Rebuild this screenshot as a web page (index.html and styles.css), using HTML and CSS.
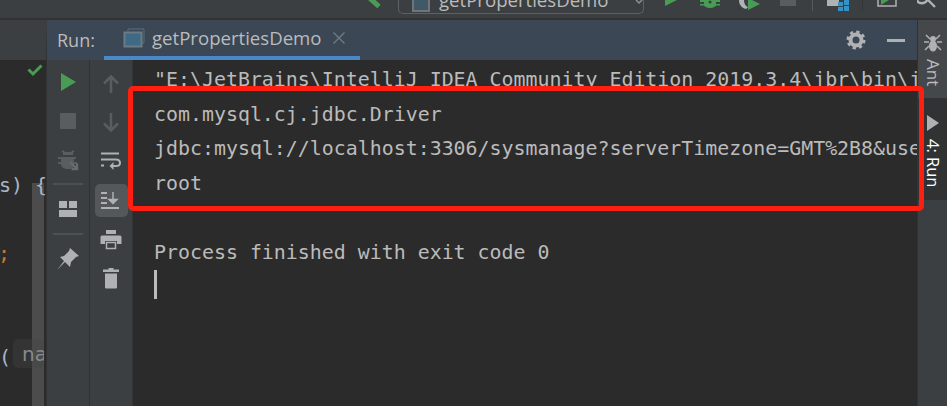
FILE: index.html
```html
<!DOCTYPE html>
<html lang="en">
<head>
<meta charset="utf-8">
<title>Run</title>
<link rel="stylesheet" href="styles.css">
</head>
<body>
<div class="window">
  <header class="topbar">
    <svg class="tb hammer" width="20" height="18" viewBox="0 0 20 18"><path d="M4.500 -2l9.500 8.500" stroke="#499c54" stroke-width="5" fill="none"/></svg>
    <div class="config">
      <svg class="cfg-ico" width="20" height="18" viewBox="0 0 20 18"><rect x="2" y="-2" width="16" height="15" fill="#3f5a66" stroke="#6e7478" stroke-width="2"/></svg>
      <span class="cfg-name">getPropertiesDemo</span>
      <svg width="8" height="5" viewBox="0 0 8 5"><path d="M1 0l3 3 3-3" fill="none" stroke="#8c9093" stroke-width="1.500"/></svg>
    </div>
    <svg class="tb t-run" width="13" height="18" viewBox="0 0 13 18"><path d="M0 0v6l12-6z" fill="#499c54"/></svg>
    <svg class="tb t-debug" width="20" height="18" viewBox="0 0 20 18"><path d="M0 0h20v2h-4v2h4v1.500h-4C15 7 13 8 10 8S5 7 4 5.500H0V4h4V2H0z" fill="#499c54"/><circle cx="10" cy="2" r="1.500" fill="#3c3f41"/></svg>
    <svg class="tb t-cov" width="22" height="18" viewBox="0 0 22 18"><path d="M1 0c0 5 3 8 7 9l2-2C7 6 6 3 6 0z" fill="#b0b3b5"/><path d="M10 -2v12l12-6z" fill="#499c54"/></svg>
    <div class="tb t-stop"></div>
    <div class="tb t-sep"></div>
    <svg class="tb t-struct" width="22" height="18" viewBox="0 0 22 18"><path d="M0 0h12v2h-1v4H0z" fill="#afb1b3"/><path fill="#3592c4" d="M11 2h5v4h-5zM17 0h5v5h-5zM11 7h5v4h-5zM17 6h5v5h-5z"/></svg>
    <div class="tb t-sep s2"></div>
    <svg class="tb t-win" width="20" height="18" viewBox="0 0 20 18"><path d="M1 0v6h18V0" fill="none" stroke="#afb1b3" stroke-width="1.500"/><path d="M4 -2v7l11-7z" fill="#499c54"/></svg>
    <svg class="tb t-search" width="20" height="18" viewBox="0 0 20 18"><path d="M0 0c1 4 8 5 11-1M11 0l7 7" fill="none" stroke="#afb1b3" stroke-width="2.400"/></svg>
  </header>
  <div class="main">
    <aside class="editor">
      <div class="gutter-wrap">
        <div class="scroll"></div>
        <pre class="code"><span class="c-b c1">s) {</span><span class="c-o c2">;</span><span class="c-b c3">(</span></pre>
        <span class="hint">na</span>
        <svg class="ok" width="16" height="14" viewBox="0 0 16 14"><path d="M1.500 6.500l4.500 4.500 8.500-8.500" fill="none" stroke="#499c54" stroke-width="3"/></svg>
      </div>
    </aside>
    <section class="run">
      <div class="run-head">
        <span class="run-label">Run:</span>
        <div class="run-tab">
          <svg class="tab-ico" width="22" height="20" viewBox="0 0 22 20"><path d="M5 3.500V1h16v14h-2" fill="none" stroke="#5d6e7c" stroke-width="1"/><rect x="1.500" y="4.500" width="17" height="14" fill="#3d6a85" stroke="#6d7a85" stroke-width="2"/></svg>
          <span class="tab-name">getPropertiesDemo</span>
          <svg class="tab-x" width="12" height="12" viewBox="0 0 12 12"><path d="M0.500 0.500l11 11M11.500 0.500l-11 11" stroke="#737b83" stroke-width="1.300"/></svg>
        </div>
        <svg class="gear" width="20" height="20" viewBox="0 0 20 20"><circle cx="10" cy="10" r="5.500" fill="none" stroke="#afb1b3" stroke-width="4"/><circle cx="10" cy="10" r="8" fill="none" stroke="#afb1b3" stroke-width="3" stroke-dasharray="3.280 3"/></svg>
        <div class="minimize"></div>
      </div>
      <div class="run-body">
        <div class="side s1">
          <svg class="i-play" width="22" height="22" viewBox="0 0 22 22"><path d="M4 2v18l15-9z" fill="#499c54"/></svg>
          <div class="stop"></div>
          <svg class="dim-bug" width="26" height="26" viewBox="0 0 26 26"><path fill="#5a5d5f" d="M8 2l2 2h6l2-2 1.500 1.500-1.500 1.500v2H8V5L6.500 3.500zM3 9h18v2h-2v3h3v2h-3c0 3-2 5-6 5s-7-2-7-5H3v-2h3v-3H3z"/><path d="M15 14l7 7M22 15.500V21h-5.500" fill="none" stroke="#686b6d" stroke-width="2.400"/></svg>
          <div class="rule"></div>
          <svg class="i-layout" width="18" height="16" viewBox="0 0 18 16"><path fill="#afb1b3" d="M0 0h8v7H0zM10 0h8v7h-8zM0 9h18v7H0z"/></svg>
          <div class="rule r2"></div>
          <svg width="24" height="24" viewBox="0 0 24 24"><path fill="#afb1b3" d="M14 1l9 8-3 1-5 5-1 5-5-5-8 8 7-9-4-4 4-1 5-5z"/></svg>
        </div>
        <div class="side s2">
          <svg width="16" height="18" viewBox="0 0 16 18"><path d="M8 18V2M1 8.500l7-7 7 7" fill="none" stroke="#5a5d5f" stroke-width="2.600"/></svg>
          <svg width="16" height="19" viewBox="0 0 16 19"><path d="M8 0v17M1 10.500l7 7 7-7" fill="none" stroke="#5a5d5f" stroke-width="2.600"/></svg>
          <svg width="20" height="20" viewBox="0 0 20 20"><path d="M0 1.500h18M0 7.500h15c2.500 0 4 1.500 4 3.500s-1.500 3-4 3h-4M0 13.500h3" fill="none" stroke="#afb1b3" stroke-width="2"/><path d="M12.500 10l-4 4 4 4z" fill="#afb1b3"/></svg>
          <div class="wrap-on"><svg width="20" height="18" viewBox="0 0 20 18"><path d="M0 1h6M0 6h6M0 11h6M0 16h18" fill="none" stroke="#afb1b3" stroke-width="2"/><path d="M12 0v7M8 7.500l4 4 4-4z" fill="#afb1b3" stroke="#afb1b3" stroke-width="1.500"/></svg></div>
          <svg width="22" height="20" viewBox="0 0 22 20"><path fill="#afb1b3" d="M6 0h10v4H6zM2 5.500h18a1.500 1.500 0 0 1 1.500 1.500v7H17v-3H5v3H.5V7A1.500 1.500 0 0 1 2 5.500z"/><path fill="none" stroke="#afb1b3" stroke-width="1.500" d="M6.500 12.500h9v6h-9z"/></svg>
          <svg width="16" height="21" viewBox="0 0 16 21"><path fill="#afb1b3" d="M5.500 0h5v1.500H16v2.500H0V1.500h5.500zM2 5.500h12v14a1 1 0 0 1-1 1H3a1 1 0 0 1-1-1z"/></svg>
        </div>
        <div class="console">
          <pre class="out">"E:\JetBrains\IntelliJ IDEA Community Edition 2019.3.4\jbr\bin\java.exe"
com.mysql.cj.jdbc.Driver
jdbc:mysql://localhost:3306/sysmanage?serverTimezone=GMT%2B8&amp;useUnicode=true
root

Process finished with exit code 0</pre>
          <div class="caret"></div>
        </div>
      </div>
    </section>
    <nav class="stripe">
      <div class="st-ant">
        <svg width="20" height="20" viewBox="0 0 20 20"><path d="M3 2l4 4M17 2l-4 4M1 9h5M19 9h-5M2 17l4-4M18 17l-4-4" stroke="#afb1b3" stroke-width="1.500" fill="none"/><circle cx="10" cy="6" r="3" fill="#afb1b3"/><ellipse cx="10" cy="13" rx="4" ry="5.500" fill="#afb1b3"/></svg>
        <span class="st-text">Ant</span>
      </div>
      <div class="st-run">
        <svg width="14" height="16" viewBox="0 0 14 16"><path d="M1 0v16l12-8z" fill="#afb1b3"/></svg>
        <span class="st-text on">4: Run</span>
      </div>
    </nav>
  </div>
  <div class="annot"></div>
</div>
</body>
</html>
```
FILE: styles.css
```css
* { box-sizing: border-box; }
html, body { margin: 0; padding: 0; background: #3c3f41; }
.window { position: relative; width: 947px; height: 406px; overflow: hidden; display: flex; flex-direction: column; background: #3c3f41; }

.topbar { height: 18px; flex: none; display: flex; align-items: flex-start; background: #3c3f41; overflow: hidden; }
.tb { flex: none; display: block; }
.hammer { margin-left: 365px; }
.config { flex: none; width: 246px; height: 14px; margin-left: 13px; display: flex; align-items: flex-end; padding: 0 9px 0 12px; border: 1px solid #5e6163; border-top: 0; border-radius: 0 0 5px 5px; position: relative; }
.cfg-ico { flex: none; margin-bottom: -3px; }
.cfg-name { font: 18.600px/24px "Open Sans", sans-serif; color: #bbbbbb; margin-left: 8px; margin-bottom: 1px; white-space: nowrap; width: 190px; flex: none; }
.config svg:last-child { flex: none; margin: 0 0 8px 6px; }
.t-run { margin-left: 21px; }
.t-debug { margin-left: 22px; }
.t-cov { margin-left: 18px; }
.t-stop { width: 16px; height: 6px; margin-left: 20px; background: #5a5d5f; }
.t-sep { width: 1px; height: 11px; margin-left: 16px; background: #565859; }
.t-struct { margin-left: 14px; }
.t-sep.s2 { margin-left: 13px; }
.t-win { margin-left: 14px; }
.t-search { margin-left: 20px; }

.main { flex: 1; min-height: 0; display: flex; border-top: 2px solid #323232; }
.editor { width: 47px; flex: none; background: #2b2b2b; border-top: 40px solid #3c3f41; border-right: 1px solid #323232; overflow: hidden; }
.gutter-wrap { position: relative; height: 346px; }
.code { margin: 0; }
.c-b, .c-o { position: absolute; font: 20px/24px "DejaVu Sans Mono", monospace; white-space: pre; }
.c-b { color: #a9b7c6; }
.c-o { color: #cc7832; }
.c1 { left: -1px; top: 113px; }
.c2 { left: -2px; top: 181px; }
.c3 { left: -1px; top: 285px; }
.hint { position: absolute; left: 13px; top: 279px; width: 31px; height: 29px; padding-left: 9px; background: rgba(70, 70, 70, 0.35); border-radius: 5px; color: #858a8f; font: 20px/30px "DejaVu Sans", sans-serif; white-space: nowrap; overflow: hidden; }
.scroll { position: absolute; left: 32px; top: 123px; width: 12px; height: 223px; background: #4c4c4c; }
.ok { position: absolute; left: 27px; top: 3px; }

.run { flex: 1; min-width: 0; display: flex; flex-direction: column; }
.run-head { height: 40px; flex: none; display: flex; align-items: center; background: #3b4754; }
.run-label { font: 18px/24px "Open Sans", sans-serif; color: #bbbbbb; margin-left: 10px; width: 47px; flex: none; }
.run-tab { width: 256px; height: 40px; flex: none; padding-left: 19px; padding-right: 16px; display: flex; align-items: center; border-bottom: 4px solid #4a88c7; }
.tab-ico { flex: none; }
.tab-name { font: 18.600px/24px "Open Sans", sans-serif; color: #bbbbbb; margin-left: 7px; white-space: nowrap; }
.tab-x { flex: none; margin-left: 11px; }
.gear { margin-left: auto; flex: none; }
.minimize { width: 18px; height: 3px; margin: 0 12px 0 21px; background: #afb1b3; flex: none; }

.run-body { flex: 1; min-height: 0; display: flex; }
.side { width: 43px; flex: none; background: #3b3f42; }
.side svg { flex: none; }
.s1 { display: flex; flex-direction: column; align-items: center; padding-top: 11px; border-right: 1px solid #303234; }
.s2 { display: grid; grid-auto-rows: 39px; place-items: center; padding-top: 4px; align-content: start; border-right: 1px solid #333537; }
.stop { width: 16px; height: 16px; margin-top: 20px; background: #5a5d5f; border-radius: 1px; }
.dim-bug { margin-top: 19px; }
.rule { width: 30px; height: 2px; margin: 9px 0 16px; background: #4d4f51; }
.rule.r2 { margin: 16px 0 12px; }
.wrap-on { width: 33px; height: 33px; display: flex; align-items: center; justify-content: center; background: #55585a; border-radius: 5px; }
.console { flex: 1; min-width: 0; overflow: hidden; padding: 3px 0 0 21px; background: #2b2b2b; }
.out { margin: 0; font: 19.920px/34.500px "DejaVu Sans Mono", monospace; color: #bbbbbb; white-space: pre; }
.caret { width: 3px; height: 29px; background: #bbbbbb; }

.stripe { width: 30px; flex: none; background: #3c3f41; border-left: 1px solid #323232; display: flex; flex-direction: column; }
.st-ant { height: 78px; padding-top: 13px; background: #45484a; display: flex; flex-direction: column; align-items: center; gap: 6px; overflow: hidden; }
.st-run { height: 102px; padding-top: 17px; background: #303234; display: flex; flex-direction: column; align-items: center; gap: 8px; }
.st-text { writing-mode: vertical-rl; font: 17px/20px "Open Sans", sans-serif; color: #bbbbbb; }
.st-text.on { color: #ffffff; font-size: 16.500px; }

.annot { position: absolute; left: 128px; top: 86px; width: 796px; height: 125px; border: 5px solid #fe1f10; border-radius: 5px; }
```
